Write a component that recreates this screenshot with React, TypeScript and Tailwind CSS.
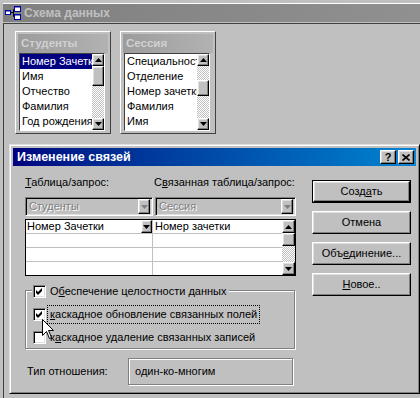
import React from 'react';

// Win98-ish bevels
const raised =
  'border border-t-white border-l-white border-r-black border-b-black shadow-[inset_-1px_-1px_0_#808080,inset_1px_1px_0_#dfdfdf]';
const sunken =
  'border border-t-[#808080] border-l-[#808080] border-r-white border-b-white shadow-[inset_1px_1px_0_#000,inset_-1px_-1px_0_#dfdfdf]';
const checker =
  'bg-[image:repeating-conic-gradient(#c0c0c0_0_25%,#ffffff_0_50%)] bg-[length:2px_2px]';
const etched =
  'border border-[#808080] shadow-[1px_1px_0_#fff,inset_1px_1px_0_#fff]';

function Tri({ up, grey }: { up?: boolean; grey?: boolean }) {
  return (
    <svg width="7" height="4" viewBox="0 0 7 4" className="block">
      {up ? (
        <path d="M3.5 0L7 4H0z" fill={grey ? '#808080' : '#000'} />
      ) : (
        <path d="M0 0h7L3.5 4z" fill={grey ? '#808080' : '#000'} />
      )}
    </svg>
  );
}

function ScrollBtn({ up, h = 'h-[12px]' }: { up?: boolean; h?: string }) {
  return (
    <div className={`${raised} ${h} shrink-0 flex items-center justify-center bg-[#c0c0c0]`}>
      <Tri up={up} />
    </div>
  );
}

function TableBox({
  title,
  items,
  selected,
  before,
  thumb,
}: {
  title: string;
  items: string[];
  selected?: number;
  before: number;
  thumb: number;
}) {
  return (
    <div className="w-[96px] h-[103px] border border-t-white border-l-white border-r-[#404040] border-b-[#404040] p-[2px] flex flex-col">
      <div className="h-[19px] shrink-0 bg-linear-to-r from-[#9c9c9c] to-[#b2b2b2] text-[#d0d0d0] font-bold text-[11.5px] flex items-center pl-[3px]">
        {title}
      </div>
      <div className="ml-[1px] mr-[3px] h-[78px] border border-t-[#404040] border-l-[#404040] border-r-white border-b-white bg-white flex">
        <div className="flex-1 min-w-0 flex flex-col">
          {items.map((it, i) => (
            <div
              key={it}
              className={
                i === selected
                  ? 'h-[15px] leading-[15px] pl-[2px] whitespace-nowrap overflow-hidden bg-[#000080] text-white'
                  : 'h-[15px] leading-[15px] pl-[2px] whitespace-nowrap overflow-hidden'
              }
            >
              {it}
            </div>
          ))}
        </div>
        <div className="w-[12px] flex flex-col">
          <ScrollBtn up />
          {before > 0 && <div className={`${checker}`} style={{ height: before }} />}
          <div className={`${raised} bg-[#c0c0c0]`} style={{ height: thumb }} />
          <div className={`${checker} flex-1`} />
          <ScrollBtn />
        </div>
      </div>
    </div>
  );
}

function SchemaIcon() {
  return (
    <svg width="16" height="14" viewBox="0 0 16 14" className="block">
      <path d="M6 6.5h2.5M8.5 3.5v7M8.5 3.5H9M8.5 10.5H9" stroke="#000" strokeWidth="1" />
      <rect x="0.5" y="4.5" width="5" height="4" fill="#fff" stroke="#0000a0" />
      <rect x="9.5" y="0.5" width="6" height="5" fill="#fff" stroke="#0000a0" />
      <rect x="9.5" y="8.5" width="6" height="5" fill="#fff" stroke="#0000a0" />
      <path d="M1 5h4M10 1h5M10 9h5" stroke="#0000a0" />
    </svg>
  );
}

function Check({ on }: { on?: boolean }) {
  return (
    <div className={`${sunken} w-[13px] h-[13px] shrink-0 bg-white flex items-center justify-center`}>
      {on && (
        <svg width="7" height="7" viewBox="0 0 7 7" className="block">
          <path d="M0 2L2 4L6 0V3L2 7L0 5z" fill="#000" />
        </svg>
      )}
    </div>
  );
}

function Combo({ text, w }: { text: string; w: string }) {
  return (
    <div className={`${sunken} ${w} h-[19px] bg-[#c0c0c0] flex items-center pl-[3px] pr-[2px]`}>
      <span className="flex-1 text-[#808080] [text-shadow:1px_1px_0_#fff]">{text}</span>
      <div className={`${raised} w-[12px] h-[15px] flex items-center justify-center`}>
        <Tri grey />
      </div>
    </div>
  );
}

function Btn({ children, def }: { children: React.ReactNode; def?: boolean }) {
  if (def)
    return (
      <div className="h-[23px] border border-black">
        <div className={`${raised} h-full flex items-center justify-center`}>{children}</div>
      </div>
    );
  return <div className={`${raised} h-[23px] flex items-center justify-center`}>{children}</div>;
}

export default function App() {
  const rowLine = 'h-[14px] border-b border-[#c0c0c0]';
  return (
    <div className="relative w-[420px] h-[398px] overflow-hidden bg-[#c0c0c0] text-black text-[11px] leading-[13px] font-[family-name:'Liberation_Sans',Arial,sans-serif]">
      {/* Схема данных window */}
      <div className="ml-[3px] mt-[3px] h-[395px] flex flex-col">
        <div className="border-t border-white">
          <div className="h-[19px] bg-linear-to-r from-[#808080] to-[#909090] flex items-center pl-[2px] gap-[3px] border-b border-[#c0c0c0]">
            <SchemaIcon />
            <span className="font-bold text-[12px] text-[#c0c0c0]">Схема данных</span>
          </div>
        </div>
        <div className="flex-1 border-t border-l border-[#404040] flex items-start gap-[9px] pl-[11px] pt-[7px]">
          <TableBox
            title="Студенты"
            items={['Номер Зачетки', 'Имя', 'Отчество', 'Фамилия', 'Год рождения']}
            selected={0}
            before={0}
            thumb={20}
          />
          <TableBox
            title="Сессия"
            items={['Специальность', 'Отделение', 'Номер зачетки', 'Фамилия', 'Имя']}
            before={14}
            thumb={16}
          />
        </div>
      </div>

      {/* Изменение связей dialog */}
      <div className="absolute left-[9px] top-[144px] w-[411px] h-[250px] bg-[#c0c0c0] border border-t-[#dfdfdf] border-l-[#dfdfdf] border-r-black border-b-black shadow-[inset_1px_1px_0_#fff,inset_-1px_-1px_0_#808080] p-[3px] flex flex-col">
        <div className="h-[18px] shrink-0 bg-linear-to-r from-[#000080] to-[#1084d0] flex items-center justify-between pl-[4px] pr-[2px]">
          <span className="font-bold text-[12.5px] text-white">Изменение связей</span>
          <div className="flex gap-[2px]">
            <div className={`${raised} w-[16px] h-[14px] bg-[#c0c0c0] flex items-center justify-center font-bold text-[11px]`}>
              ?
            </div>
            <div className={`${raised} w-[16px] h-[14px] bg-[#c0c0c0] flex items-center justify-center`}>
              <svg width="8" height="7" viewBox="0 0 8 7" className="block">
                <path d="M0.5 0.5L7.5 6.5M7.5 0.5L0.5 6.5" stroke="#000" strokeWidth="1.6" />
              </svg>
            </div>
          </div>
        </div>

        <div className="flex-1 flex pl-[12px] pr-[4px] pt-[10px]">
          {/* left column */}
          <div className="w-[271px] flex flex-col">
            <div className="h-[13px] flex">
              <span className="w-[129px]">
                <span className="underline">Т</span>аблица/запрос:
              </span>
              <span>
                С<span className="underline">в</span>язанная таблица/запрос:
              </span>
            </div>
            <div className="mt-[8px] flex gap-[2px]">
              <Combo text="Студенты" w="w-[128px]" />
              <Combo text="Сессия" w="w-[141px]" />
            </div>

            {/* grid */}
            <div className="mt-[3px] h-[57px] border border-black bg-white flex">
              <div className="w-[127px] border-r border-[#c0c0c0] flex flex-col">
                <div className={`${rowLine} flex items-center pl-[1px]`}>
                  <span className="flex-1">Номер Зачетки</span>
                  <div className={`${raised} w-[11px] h-[13px] bg-[#c0c0c0] flex items-center justify-center`}>
                    <Tri />
                  </div>
                </div>
                <div className={rowLine} />
                <div className={rowLine} />
                <div className="h-[13px]" />
              </div>
              <div className="flex-1 flex flex-col">
                <div className={`${rowLine} flex items-center pl-[2px]`}>Номер зачетки</div>
                <div className={rowLine} />
                <div className={rowLine} />
                <div className="h-[13px]" />
              </div>
              <div className="w-[13px] flex flex-col">
                <ScrollBtn up h="h-[13px]" />
                <div className={`${raised} h-[13px] bg-[#c0c0c0]`} />
                <div className={`${checker} flex-1`} />
                <ScrollBtn h="h-[13px]" />
              </div>
            </div>

            {/* group box */}
            <div className={`${etched} mt-[14px] h-[59px] w-[270px] flex flex-col`}>
              <div className="-mt-[6px] ml-[6px] pl-[1px] pr-[3px] bg-[#c0c0c0] self-start flex items-center gap-[4px] h-[13px]">
                <Check on />
                <span>
                  О<span className="underline">б</span>еспечение целостности данных
                </span>
              </div>
              <div className="mt-[10px] ml-[7px] flex items-center gap-[4px] h-[13px]">
                <Check on />
                <span className="outline-1 outline-dotted outline-black outline-offset-[2px]">
                  <span className="underline">к</span>аскадное обновление связанных полей
                </span>
              </div>
              <div className="mt-[10px] ml-[7px] flex items-center gap-[4px] h-[13px]">
                <Check />
                <span>
                  к<span className="underline">а</span>скадное удаление связанных записей
                </span>
              </div>
            </div>

            <div className="mt-[9px] flex items-center">
              <span className="w-[103px] pl-[2px]">Тип отношения:</span>
              <div className={`${etched} w-[165px] h-[27px] flex items-center pl-[6px]`}>один-ко-многим</div>
            </div>
          </div>

          {/* right column */}
          <div className="ml-[16px] w-[99px] pt-[4px] flex flex-col gap-[8px]">
            <Btn def>
              <span>
                Созд<span className="underline">а</span>ть
              </span>
            </Btn>
            <Btn>Отмена</Btn>
            <Btn>
              <span>
                Объ<span className="underline">е</span>динение...
              </span>
            </Btn>
            <Btn>
              <span>
                <span className="underline">Н</span>овое..
              </span>
            </Btn>
          </div>
        </div>
      </div>

      {/* mouse pointer */}
      <svg width="13" height="21" viewBox="0 0 13 21" className="absolute left-[42px] top-[319px]">
        <path
          d="M0.5 0.5V16.5L4.5 12.5L7.5 19.5L9.5 18.5L6.5 11.5H11.5Z"
          fill="#fff"
          stroke="#000"
          strokeWidth="1"
        />
      </svg>
    </div>
  );
}
